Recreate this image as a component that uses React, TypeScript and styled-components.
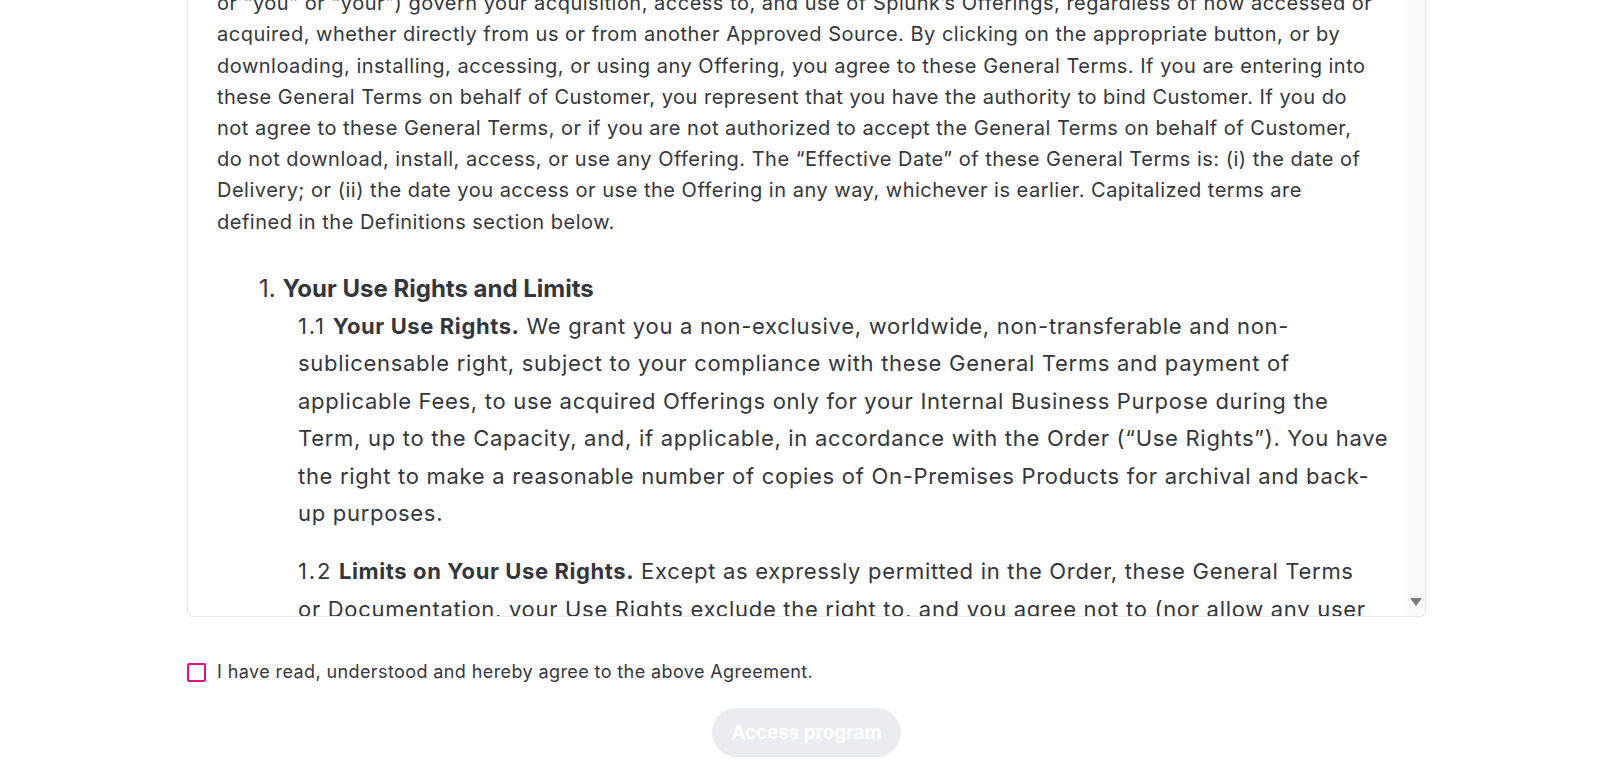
import React from "react";
import styled, { createGlobalStyle } from "styled-components";

const GlobalStyle = createGlobalStyle`
  body {
    margin: 0;
    background: #ffffff;
    font-family: Inter, "Noto Sans", "Liberation Sans", sans-serif;
    color: #33373d;
    overflow: hidden;
  }
`;

const intro = [
  "These Splunk General Terms (“General Terms”) between Splunk and Customer (“Customer”",
  "or “you” or “your”) govern your acquisition, access to, and use of Splunk’s Offerings, regardless of how accessed or",
  "acquired, whether directly from us or from another Approved Source. By clicking on the appropriate button, or by",
  "downloading, installing, accessing, or using any Offering, you agree to these General Terms. If you are entering into",
  "these General Terms on behalf of Customer, you represent that you have the authority to bind Customer. If you do",
  "not agree to these General Terms, or if you are not authorized to accept the General Terms on behalf of Customer,",
  "do not download, install, access, or use any Offering. The “Effective Date” of these General Terms is: (i) the date of",
  "Delivery; or (ii) the date you access or use the Offering in any way, whichever is earlier. Capitalized terms are",
  "defined in the Definitions section below.",
];

const clauses = [
  {
    num: "1.1",
    title: "Your Use Rights.",
    lines: [
      "We grant you a non-exclusive, worldwide, non-transferable and non-",
      "sublicensable right, subject to your compliance with these General Terms and payment of",
      "applicable Fees, to use acquired Offerings only for your Internal Business Purpose during the",
      "Term, up to the Capacity, and, if applicable, in accordance with the Order (“Use Rights”). You have",
      "the right to make a reasonable number of copies of On-Premises Products for archival and back-",
      "up purposes.",
    ],
  },
  {
    num: "1.2",
    title: "Limits on Your Use Rights.",
    lines: [
      "Except as expressly permitted in the Order, these General Terms",
      "or Documentation, your Use Rights exclude the right to, and you agree not to (nor allow any user",
      "to) do any of the following: (a) copy, sell, rent, lease, sublicense, distribute, pledge, assign or",
    ],
  },
];

const App = () => {
  return (
    <>
      <GlobalStyle />
      <Page>
        <TermsBox>
          <TermsContent>
            <Intro>
              {intro.map((line, i) => (
                <Line key={i}>{line}</Line>
              ))}
            </Intro>
            <SectionTitle>
              1. <strong>Your Use Rights and Limits</strong>
            </SectionTitle>
            {clauses.map(c => (
              <Clause key={c.num}>
                {c.lines.map((line, i) => (
                  <Line key={i}>
                    {i === 0 && (
                      <>
                        <ClauseNum>{c.num}</ClauseNum> <strong>{c.title}</strong>{" "}
                      </>
                    )}
                    {line}
                  </Line>
                ))}
              </Clause>
            ))}
          </TermsContent>
          <ScrollTrack>
            <ArrowDown />
          </ScrollTrack>
        </TermsBox>
        <AgreeRow>
          <Checkbox type="checkbox" id="agree" />
          <label htmlFor="agree">
            I have read, understood and hereby agree to the above Agreement.
          </label>
        </AgreeRow>
        <AccessButton disabled>Access program</AccessButton>
      </Page>
    </>
  );
};

/* the page is scrolled down a little, so the box top sits above the fold */
const Page = styled.main`
  width: 1239px;
  margin: -60px 0 0 187px;
  display: flex;
  flex-direction: column;
  align-items: center;
`;

const TermsBox = styled.section`
  align-self: stretch;
  height: 677px;
  box-sizing: border-box;
  display: flex;
  border: 1px solid #e3e6ea;
  border-radius: 6px;
  overflow: hidden;
`;

const TermsContent = styled.div`
  flex: 1;
  min-width: 0;
  padding: 16px 0 0 29px;
  overflow: hidden;
`;

const Line = styled.span`
  display: block;
  white-space: nowrap;
`;

const Intro = styled.p`
  margin: 0;
  font-size: 20px;
  letter-spacing: 0.5px;
  line-height: 31.2px;
`;

const SectionTitle = styled.h3`
  margin: 32px 0 0 42px;
  font-size: 24px;
  font-weight: 400;
  line-height: 38px;
  strong {
    font-weight: 700;
  }
`;

const Clause = styled.p`
  margin: 0 0 20.5px 81px;
  font-size: 22px;
  letter-spacing: 0.7px;
  line-height: 37.45px;
  strong {
    font-weight: 700;
    letter-spacing: 0.6px;
  }
`;

const ClauseNum = styled.span`
  letter-spacing: 1.8px;
`;

const ScrollTrack = styled.div`
  width: 18px;
  flex-shrink: 0;
  background: #fafafa;
  display: flex;
  flex-direction: column;
  justify-content: flex-end;
  align-items: center;
  padding-bottom: 10px;
`;

const ArrowDown = styled.span`
  width: 0;
  height: 0;
  border-left: 6px solid transparent;
  border-right: 6px solid transparent;
  border-top: 8px solid #7a7a7a;
`;

const AgreeRow = styled.div`
  align-self: stretch;
  margin-top: 43px;
  display: flex;
  align-items: center;
  gap: 11px;
  font-size: 18px;
  letter-spacing: 0.4px;
  line-height: 24px;
  label {
    cursor: pointer;
  }
`;

const Checkbox = styled.input`
  appearance: none;
  margin: 0;
  width: 19px;
  height: 19px;
  box-sizing: border-box;
  border: 2px solid #e0137f;
  border-radius: 2px;
  background: #fff;
  cursor: pointer;
`;

const AccessButton = styled.button`
  margin-top: 24px;
  width: 189px;
  height: 49px;
  border: none;
  border-radius: 25px;
  background: #e9ecf0;
  color: #ffffff;
  font-family: inherit;
  font-size: 18.8px;
  font-weight: 700;
`;

export default App;
